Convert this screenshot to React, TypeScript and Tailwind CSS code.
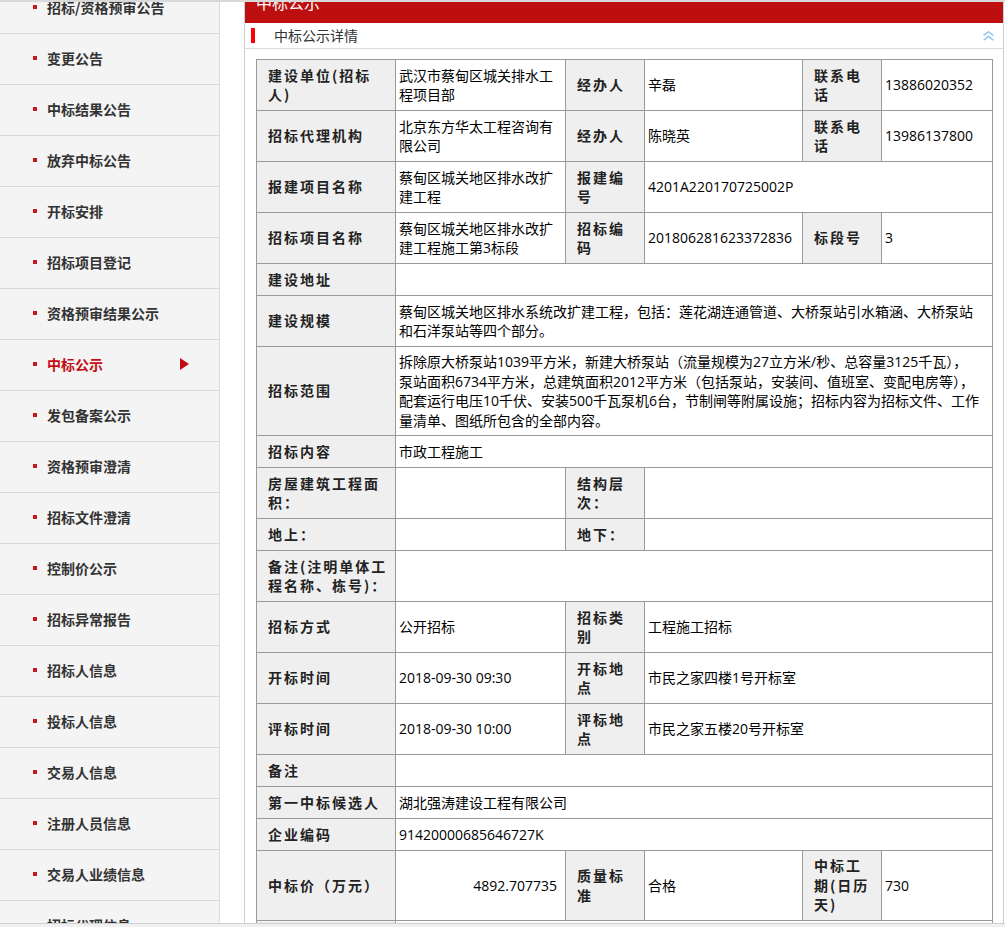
import React from "react";

const menu = [
  "招标/资格预审公告", "变更公告", "中标结果公告", "放弃中标公告", "开标安排", "招标项目登记",
  "资格预审结果公示", "中标公示", "发包备案公示", "资格预审澄清", "招标文件澄清", "控制价公示",
  "招标异常报告", "招标人信息", "投标人信息", "交易人信息", "注册人员信息", "交易人业绩信息", "招标代理信息",
];
const ACTIVE = "中标公示";

type Cell = { t?: string; l?: boolean; s?: number; r?: boolean };
type Row = { h: number; c: Cell[] };

// label / value helpers
const L = (t: string): Cell => ({ t, l: true });
const V = (t = "", s = 1, r = false): Cell => ({ t, s, r });

const rows: Row[] = [
  { h: 51, c: [L("建设单位(招标\n人)"), V("武汉市蔡甸区城关排水工\n程项目部"), L("经办人"), V("辛磊"), L("联系电\n话"), V("13886020352")] },
  { h: 51, c: [L("招标代理机构"), V("北京东方华太工程咨询有\n限公司"), L("经办人"), V("陈晓英"), L("联系电\n话"), V("13986137800")] },
  { h: 51, c: [L("报建项目名称"), V("蔡甸区城关地区排水改扩\n建工程"), L("报建编\n号"), V("4201A220170725002P", 3)] },
  { h: 51, c: [L("招标项目名称"), V("蔡甸区城关地区排水改扩\n建工程施工第3标段"), L("招标编\n码"), V("201806281623372836"), L("标段号"), V("3")] },
  { h: 32, c: [L("建设地址"), V("", 5)] },
  { h: 51, c: [L("建设规模"), V("蔡甸区城关地区排水系统改扩建工程，包括：莲花湖连通管道、大桥泵站引水箱涵、大桥泵站\n和石洋泵站等四个部分。", 5)] },
  {
    h: 89,
    c: [
      L("招标范围"),
      V(
        "拆除原大桥泵站1039平方米，新建大桥泵站（流量规模为27立方米/秒、总容量3125千瓦），\n泵站面积6734平方米，总建筑面积2012平方米（包括泵站，安装间、值班室、变配电房等），\n配套运行电压10千伏、安装500千瓦泵机6台，节制闸等附属设施；招标内容为招标文件、工作\n量清单、图纸所包含的全部内容。",
        5
      ),
    ],
  },
  { h: 32, c: [L("招标内容"), V("市政工程施工", 5)] },
  { h: 51, c: [L("房屋建筑工程面\n积："), V(""), L("结构层\n次："), V("", 3)] },
  { h: 32, c: [L("地上："), V(""), L("地下："), V("", 3)] },
  { h: 51, c: [L("备注(注明单体工\n程名称、栋号)："), V("", 5)] },
  { h: 51, c: [L("招标方式"), V("公开招标"), L("招标类\n别"), V("工程施工招标", 3)] },
  { h: 51, c: [L("开标时间"), V("2018-09-30 09:30"), L("开标地\n点"), V("市民之家四楼1号开标室", 3)] },
  { h: 51, c: [L("评标时间"), V("2018-09-30 10:00"), L("评标地\n点"), V("市民之家五楼20号开标室", 3)] },
  { h: 32, c: [L("备注"), V("", 5)] },
  { h: 32, c: [L("第一中标候选人"), V("湖北强涛建设工程有限公司", 5)] },
  { h: 32, c: [L("企业编码"), V("91420000685646727K", 5)] },
  { h: 70, c: [L("中标价（万元）"), V("4892.707735", 1, true), L("质量标\n准"), V("合格"), L("中标工\n期(日历\n天)"), V("730")] },
  { h: 51, c: [L("备注"), V("", 5)] },
];

const rowH: Record<number, string> = {
  32: "h-[32px]",
  51: "h-[51px]",
  70: "h-[70px]",
  89: "h-[89px]",
};

function SideMenu() {
  return (
    <aside className="w-[220px] shrink-0 bg-[#f4f4f4] border-r border-[#dcdcdc]">
      {menu.map((m) => (
        <div key={m} className="h-[51px] border-b border-[#dadada] flex items-center pl-[33px] pb-[2px]">
          <span className="w-[4px] h-[4px] bg-[#c9161c] mr-[10px]" />
          <span className={"text-[14px] font-bold leading-[20px] " + (m === ACTIVE ? "text-[#c30d14]" : "text-[#333]")}>{m}</span>
          {m === ACTIVE && (
            <svg width="9" height="12" viewBox="0 0 9 12" className="ml-auto mr-[30px]">
              <polygon points="0,0 9,6 0,12" fill="#c30d14" />
            </svg>
          )}
        </div>
      ))}
    </aside>
  );
}

function DetailTable() {
  return (
    <table className="w-[736px] table-fixed border-collapse text-[14px] leading-[19.5px]">
      <colgroup>
        <col className="w-[139px]" />
        <col className="w-[170px]" />
        <col className="w-[79px]" />
        <col className="w-[158px]" />
        <col className="w-[79px]" />
        <col className="w-[111px]" />
      </colgroup>
      <tbody>
        {rows.map((row, i) => (
          <tr key={i} className={rowH[row.h]}>
            {row.c.map((c, j) =>
              c.l ? (
                <td key={j} className="border border-[#9a9a9a] bg-[#efefef] pl-[11px] pr-[4px] py-0 font-bold tracking-[2px] text-[#222] whitespace-pre align-middle">
                  {c.t}
                </td>
              ) : (
                <td
                  key={j}
                  colSpan={c.s}
                  className={"border border-[#9a9a9a] bg-white pl-[3px] py-0 text-black whitespace-pre align-middle font-['Open_Sans','Noto_Sans_CJK_SC',sans-serif] " + (c.r ? "text-right pr-[8px]" : "pr-[2px]")}
                >
                  {c.t}
                </td>
              )
            )}
          </tr>
        ))}
      </tbody>
    </table>
  );
}

export default function App() {
  return (
    <div className="relative w-[1005px] h-[927px] overflow-hidden bg-white font-['Noto_Sans_CJK_SC',sans-serif]">
      <div className="flex -mt-[17px]">
        <SideMenu />
        <main className="ml-[24px] w-[760px] shrink-0 border-x border-[#cfcfcf] bg-white">
          <div className="h-[40px] bg-[#be0f10] pl-[11px] text-[16px] leading-[38px] text-white">中标公示</div>
          <div className="h-[26px] border-b border-[#dcdcdc] flex items-center pl-[6px] pr-[9px]">
            <span className="w-[4px] h-[15px] bg-[#ff0000]" />
            <span className="ml-[19px] text-[14px] text-[#333]">中标公示详情</span>
            <svg width="11" height="10" viewBox="0 0 11 10" className="ml-auto" fill="none" stroke="#86bff0" strokeWidth="1.3">
              <polyline points="0.6,4.6 5.5,0.8 10.4,4.6" />
              <polyline points="0.6,9.2 5.5,5.4 10.4,9.2" />
            </svg>
          </div>
          <div className="pt-[10px] pl-[11px] pb-[20px]">
            <DetailTable />
          </div>
        </main>
      </div>
      <div className="absolute top-0 left-0 right-0 h-[2px] bg-[#d9d9d9]" />
      <div className="absolute bottom-0 left-0 right-0 h-[4px] bg-[#f0f0f0] border-t border-[#d0d0d0]" />
    </div>
  );
}
